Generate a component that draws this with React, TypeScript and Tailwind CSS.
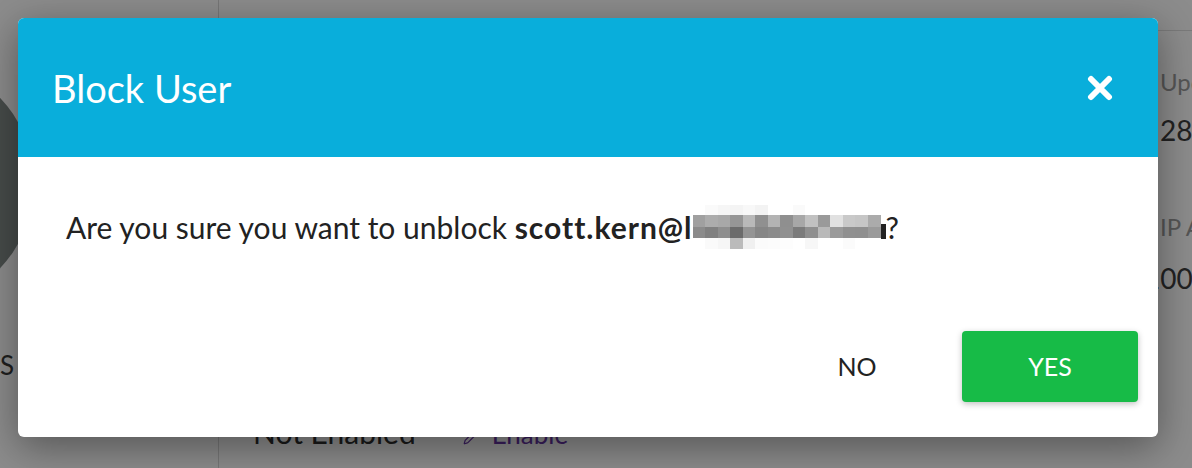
import { Pencil } from "lucide-react";

const blurRows = [
  ["#ffffff", "#fafafa", "#f6f6f6", "#f4f4f4", "#f8f8f8", "#f3f3f3", "#ffffff", "#ffffff", "#fafafa", "#ffffff", "#ffffff", "#ffffff", "#ffffff", "#ffffff", "#ffffff"],
  ["#a0a0a0", "#acacac", "#a8a8a8", "#969696", "#b9b9b9", "#909090", "#b3b3b3", "#8f8f8f", "#a7a7a7", "#c1c1c1", "#9a9a9a", "#e1e1e1", "#c9c9c9", "#c6c6c6", "#ababab"],
  ["#8b8b8b", "#808080", "#8e8e8e", "#6b6b6b", "#949494", "#868686", "#8b8b8b", "#909090", "#7b7b7b", "#8f8f8f", "#b9b9b9", "#9a9a9a", "#909090", "#8f8f8f", "#9a9a9a"],
  ["#ffffff", "#fafafa", "#f6f6f6", "#bbbbbb", "#f0f0f0", "#fbfbfb", "#fcfcfc", "#fdfdfd", "#ffffff", "#f7f7f7", "#ffffff", "#ffffff", "#fbfbfb", "#ffffff", "#ffffff"],
];
const rowHeights = ["h-[10px]", "h-[12px]", "h-[11px]", "h-[11px]"];

// pixelated email domain
function Redacted() {
  return (
    <span className="inline-block w-[188px] h-[44px] align-top">
      {blurRows.map((row, r) => (
        <span key={r} className={`flex ${rowHeights[r]}`}>
          {row.map((c, i) => (
            <span key={i} className="flex-1" style={{ backgroundColor: c }} />
          ))}
        </span>
      ))}
    </span>
  );
}

function CloseIcon() {
  return (
    <svg width="26" height="26" viewBox="0 0 26 26" fill="none">
      <path d="M4 4L22 22M22 4L4 22" stroke="white" strokeWidth="6" strokeLinecap="round" />
    </svg>
  );
}

function Backdrop() {
  return (
    <div className="flex h-full">
      <div className="w-[219px] shrink-0 border-r border-[#d9d9d9] overflow-hidden">
        <div className="w-[248px] h-[248px] rounded-full bg-[#818a88] ml-[-214px] mt-[59px]" />
        <div className="mt-[43px] text-[26px] leading-[30px] text-[#3a3a3a] whitespace-nowrap">
          S<span className="ml-[8px]">ecurity</span>
        </div>
      </div>
      <div className="flex-1 flex flex-col">
        <div className="h-[31px] shrink-0 border-b border-[#dedede]" />
        <div className="flex flex-1">
          <div className="flex-1 pl-[34px]">
            <div className="mt-[382px] flex items-center text-[30px] leading-[34px] whitespace-nowrap">
              <span className="text-[#303030]">Not Enabled</span>
              <span className="ml-[47px] flex items-center gap-[14px] text-[26px] text-[#6b38ab]">
                <Pencil size={15} strokeWidth={2} className="mt-[10px]" />
                <span className="mt-[4px]">Enable</span>
              </span>
            </div>
          </div>
          <div className="w-[32px] shrink-0 whitespace-nowrap">
            <div className="mt-[36px] text-[24px] leading-[30px] text-[#9b9b9b]">Updated</div>
            <div className="mt-[16px] text-[28px] leading-[34px] text-[#3e3e3e]">28 Jan</div>
            <div className="mt-[65px] text-[24px] leading-[30px] text-[#9b9b9b]">IP Address</div>
            <div className="mt-[19px] ml-[-16px] text-[28px] leading-[34px] text-[#3e3e3e]">100.64.0.1</div>
          </div>
        </div>
      </div>
    </div>
  );
}

export default function App() {
  return (
    <div
      className="relative w-[1192px] h-[468px] overflow-hidden bg-white"
      style={{ fontFamily: "Lato, 'Noto Sans', sans-serif" }}
    >
      <Backdrop />
      <div className="absolute inset-0 bg-black/45 pl-[18px] pt-[18px]">
        <div className="w-[1140px] h-[419px] flex flex-col bg-white rounded-[6px] shadow-[0_10px_40px_rgba(0,0,0,0.4)] overflow-hidden">
          <div className="h-[139px] shrink-0 bg-[#09aedb] flex items-center justify-between pl-[34px] pr-[45px]">
            <h2 className="pt-[2px] text-[38px] text-white font-normal">Block User</h2>
            <button className="flex items-center justify-center">
              <CloseIcon />
            </button>
          </div>
          <div className="flex-1 px-[48px] pt-[48px]">
            <p className="text-[30px] leading-[44px] text-[#222222] whitespace-nowrap">
              Are you sure you want to unblock{" "}
              <b className="font-bold tracking-[1px]">scott.kern@l</b>
              <Redacted />
              <span className="inline-block w-[5px] h-[15px] bg-[#222222] align-baseline" />?
            </p>
          </div>
          <div className="flex justify-end items-center gap-[55px] pr-[20px] pb-[35px]">
            <button className="w-[100px] h-[71px] text-[25px] text-[#222222] uppercase">No</button>
            <button className="w-[176px] h-[71px] rounded-[4px] bg-[#17bb47] text-[25px] text-white uppercase shadow-[0_2px_6px_rgba(0,0,0,0.25)]">
              Yes
            </button>
          </div>
        </div>
      </div>
    </div>
  );
}
